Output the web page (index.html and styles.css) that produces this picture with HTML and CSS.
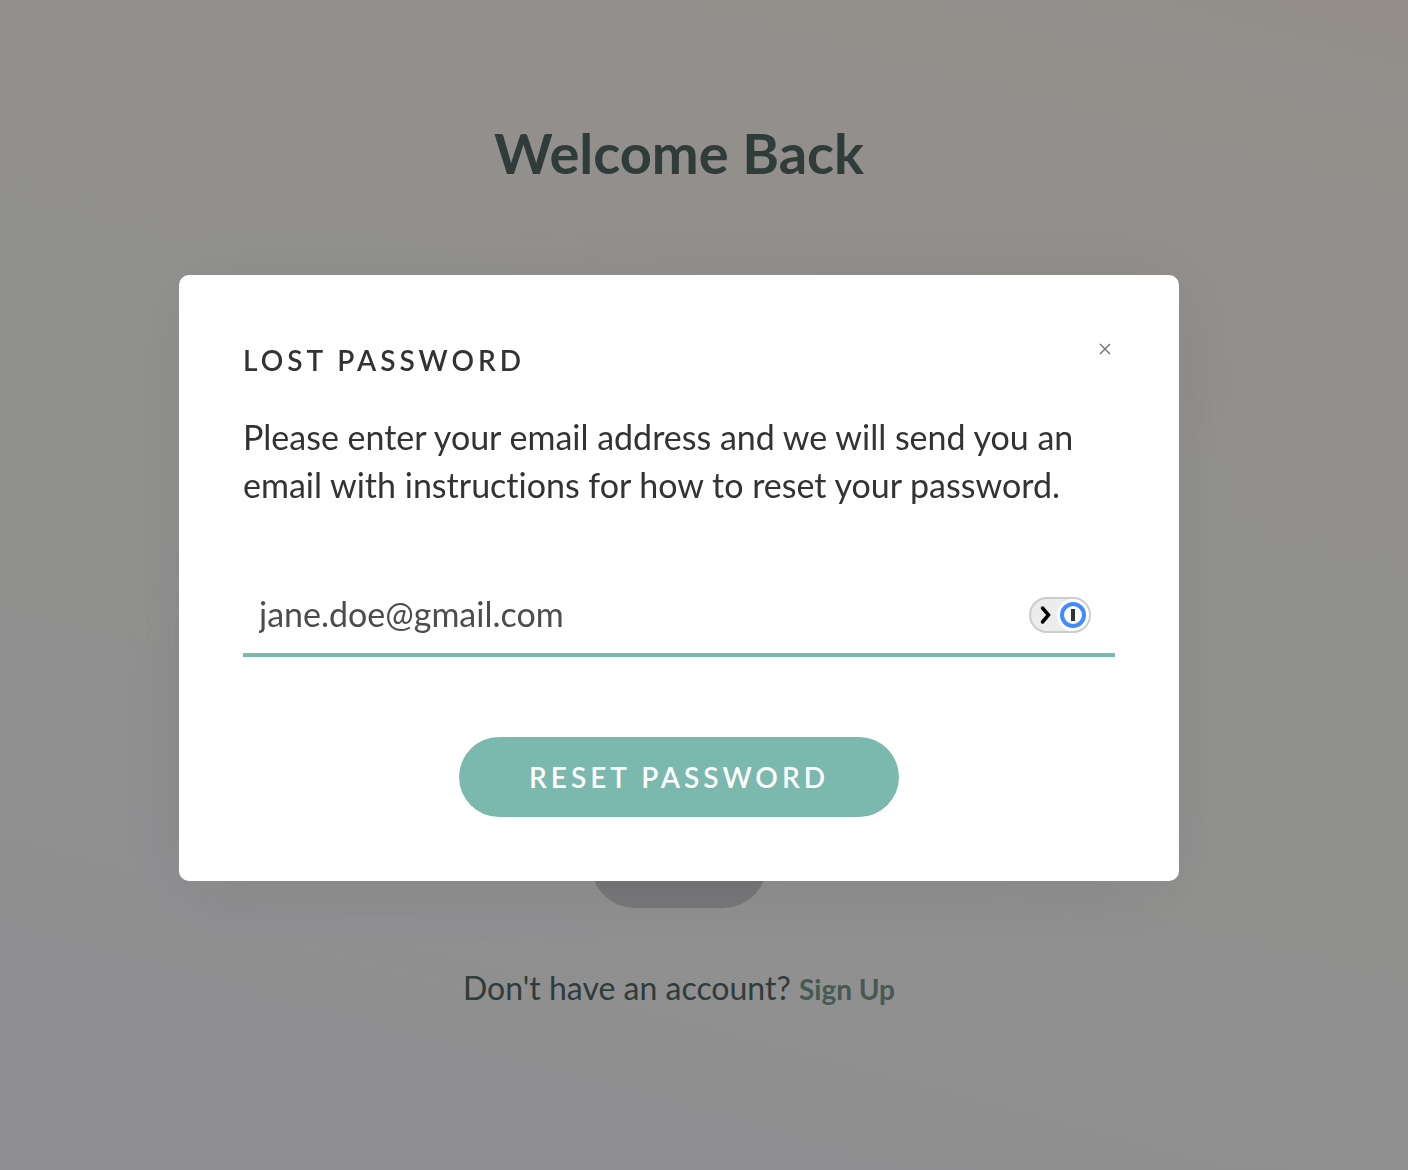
FILE: index.html
```html
<!DOCTYPE html>
<html lang="en">
<head>
    <meta charset="UTF-8">
    <meta name="viewport" content="width=device-width, initial-scale=1.0">
    <title>Lost Password</title>
    <link rel="stylesheet" href="styles.css">
</head>
<body>

<main class="login">
    <h1>Welcome Back</h1>
    <button class="login-button" type="button" aria-label="Log in"></button>
    <p class="signup">Don't have an account? <a href="#">Sign Up</a></p>
</main>

<div class="overlay">
    <div class="modal" role="dialog" aria-modal="true" aria-labelledby="modal-title">
        <div class="modal-header">
            <h2 id="modal-title">LOST PASSWORD</h2>
            <button class="close-button" type="button" aria-label="Close">
                <svg width="12" height="12" viewBox="0 0 12 12" fill="none" stroke="#777" stroke-width="1.5">
                    <path d="M1 1l10 10M11 1L1 11"/>
                </svg>
            </button>
        </div>
        <p class="modal-text">Please enter your email address and we will send you an email with instructions for how to reset your password.</p>
        <form>
            <div class="field">
                <input type="email" id="email" value="jane.doe@gmail.com" aria-label="Email address">
                <button class="autofill" type="button" aria-label="Fill in email">
                    <svg width="62" height="36" viewBox="0 0 62 36" fill="none">
                        <rect x="1" y="1" width="60" height="34" rx="17" fill="#ececec" stroke="#ccc" stroke-width="2"/>
                        <path d="M13.5 11l6 7-6 7" stroke="#000" stroke-width="3.5" stroke-linecap="round"/>
                        <circle cx="44" cy="18" r="16" fill="#fff"/>
                        <circle cx="44" cy="18" r="11" stroke="#448aff" stroke-width="4"/>
                        <rect x="42" y="12" width="4" height="12" fill="#333"/>
                    </svg>
                </button>
            </div>
            <button class="reset-button" type="submit">RESET PASSWORD</button>
        </form>
    </div>
</div>

</body>
</html>
```
FILE: styles.css
```css
:root {
    --primary-color: #7bb8ae;
    --text-color: #333;
    --heading-color: #50645f;
    --font-family: Lato, 'Liberation Sans', sans-serif;
}

* {
    box-sizing: border-box;
}

body {
    font-family: var(--font-family);
    font-size: 34px;
    font-variant-ligatures: none;
    color: var(--text-color);
    margin: 0;
}

h1, h2, p {
    margin: 0;
}

button {
    font-family: inherit;
    border: none;
    padding: 0;
    cursor: pointer;
}

.login {
    display: flex;
    flex-direction: column;
    align-items: center;
    min-height: 100vh;
    padding: 120px 50px 140px 0;
    background: linear-gradient(195deg, #f5ede7 0%, #f4efea 20%, #f2f1ef 34%, #f1f1ef 55%, #efeff2 85%, #eeeef3 100%);
    color: var(--heading-color);
}

.login h1 {
    font-size: 56px;
    font-weight: 700;
    line-height: 66px;
}

.login-button {
    width: 176px;
    height: 88px;
    margin-top: 634px;
    border-radius: 44px;
    background-color: #c6c6ca;
}

.signup {
    margin-top: 56px;
    font-size: 32px;
    line-height: 48px;
}

.signup a {
    font-size: 28px;
    font-weight: 700;
    color: #74968a;
    text-decoration: none;
}

.overlay {
    position: fixed;
    inset: 0;
    display: flex;
    align-items: center;
    justify-content: center;
    padding: 0 50px 14px 0;
    background-color: rgba(0, 0, 0, 0.4);
}

.modal {
    width: 100%;
    max-width: 1000px;
    padding: 64px;
    border-radius: 10px;
    background-color: white;
    box-shadow: 0 8px 80px rgba(0, 0, 0, 0.08);
}

.modal-header {
    display: flex;
    align-items: flex-start;
    justify-content: space-between;
    margin-bottom: 32px;
}

.modal h2 {
    font-size: 28px;
    font-weight: 600;
    line-height: 42px;
    letter-spacing: 4px;
}

.close-button {
    display: flex;
    padding: 4px;
    background: none;
}

.modal-text {
    line-height: 48px;
    margin-bottom: 64px;
}

form {
    display: flex;
    flex-direction: column;
    align-items: center;
    gap: 80px;
}

.field {
    display: flex;
    align-items: center;
    width: 100%;
    height: 84px;
    padding: 0 24px 0 16px;
    border-bottom: 4px solid var(--primary-color);
}

.field input {
    flex: 1;
    min-width: 0;
    padding: 0;
    border: none;
    outline: none;
    background: none;
    font-family: inherit;
    font-size: 34px;
    color: #4d4d4d;
}

.autofill {
    display: flex;
    margin-top: 4px;
    background: none;
}

.reset-button {
    height: 80px;
    padding: 0 70px;
    border-radius: 40px;
    background-color: var(--primary-color);
    color: white;
    font-size: 28px;
    font-weight: 600;
    letter-spacing: 4px;
}
```
